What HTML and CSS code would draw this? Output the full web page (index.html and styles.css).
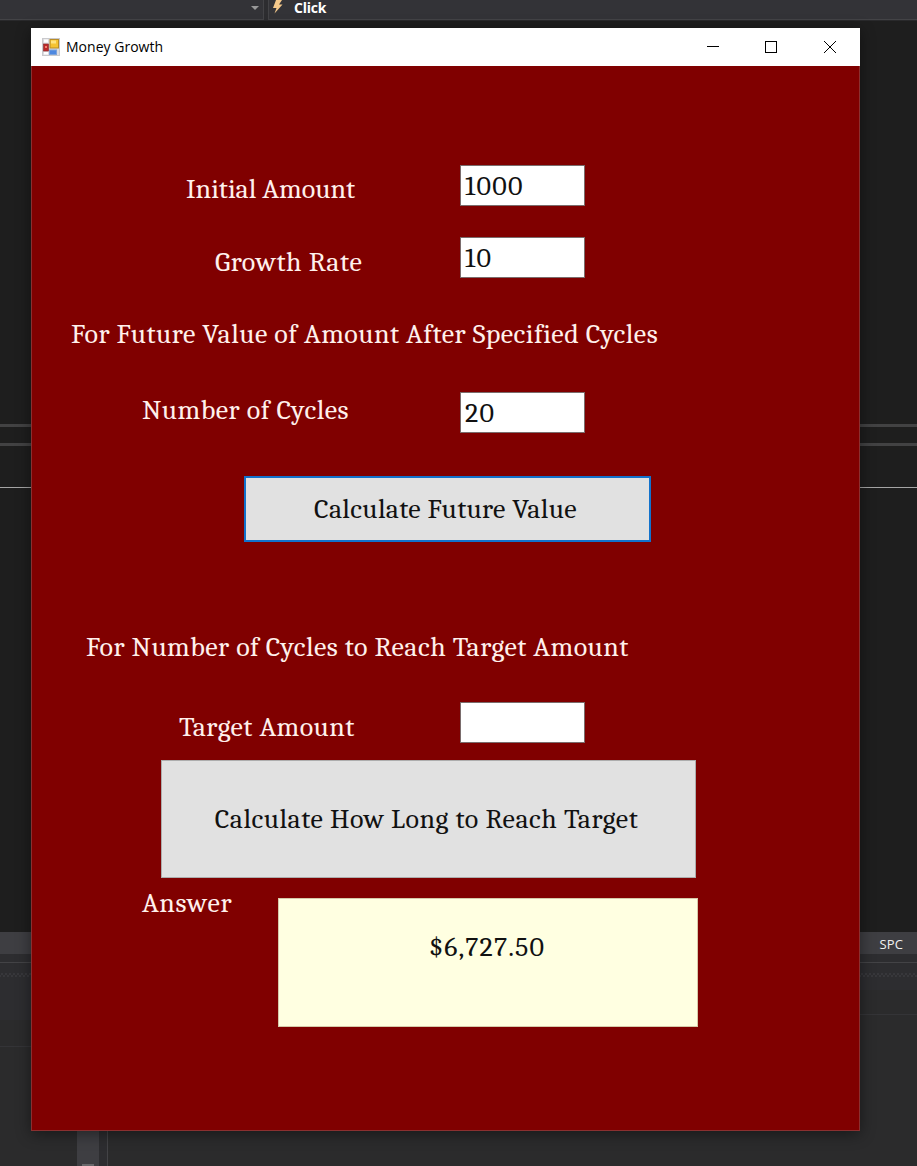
FILE: index.html
```html
<!DOCTYPE html>
<html lang="en">
<head>
<meta charset="utf-8">
<title>Money Growth</title>
<link rel="stylesheet" href="styles.css">
</head>
<body>
<div class="ide">
  <div class="toolbar">
    <div class="combo"><span class="caret"></span></div>
    <div class="combo event">
      <svg class="bolt" width="12" height="14" viewBox="0 0 12 14"><path d="M4 0H10L7 4.5H10.5L2.5 13.5L4.5 8H1Z" fill="#f5c98b"/></svg>
      <span>Click</span>
    </div>
  </div>
  <div class="editor"><div class="rule"></div><div class="rule second"></div><div class="rule bright"></div></div>
  <div class="status">SPC</div>
  <div class="splitter"></div>
  <div class="panels">
    <div class="panel left"></div>
    <div class="panel right"></div>
  </div>
  <div class="dock"><div class="scroll"><span></span></div><div class="dockline"></div></div>
</div>

<main class="window">
  <header class="titlebar">
    <svg class="appicon" width="18" height="18" viewBox="0 0 18 18">
      <rect x=".5" y=".5" width="17" height="17" fill="#dcdce0" stroke="#c9c9cc"/>
      <path d="M2 1.500H6V4.500H2ZM2 14H6V16.500H2Z" fill="#fff"/>
      <rect x="1.500" y="6" width="5" height="7" fill="#bd2929" stroke="#8d3232" stroke-width=".7"/>
      <rect x="3" y="8" width="2" height="2" fill="#f08070"/>
      <rect x="8" y="1.500" width="8.500" height="8.500" fill="#f6c331" stroke="#b88c27"/>
      <rect x="9" y="2.500" width="5" height="3" fill="#ffe37e"/>
      <rect x="7.500" y="12" width="7" height="4.500" fill="#4d88e0" stroke="#7ba2da"/>
    </svg>
    <span class="caption">Money Growth</span>
    <svg class="controls" width="132" height="14" viewBox="0 0 132 14" fill="none" stroke="#000">
      <path d="M0 6.500H12"/><rect x="58.500" y="1.500" width="11" height="11"/><path d="M117 1L129 13M129 1L117 13"/>
    </svg>
  </header>
  <form class="form">
    <div class="row initial"><label>Initial Amount</label><div class="field">1000</div></div>
    <div class="row growth"><label>Growth Rate</label><div class="field">10</div></div>
    <h2 class="future-title">For Future Value of Amount After Specified Cycles</h2>
    <div class="row cycles"><label>Number of Cycles</label><div class="field">20</div></div>
    <button type="button" class="calc-future">Calculate Future Value</button>
    <h2 class="target-title">For Number of Cycles to Reach Target Amount</h2>
    <div class="row target"><label>Target Amount</label><div class="field"></div></div>
    <button type="button" class="calc-target">Calculate How Long to Reach Target</button>
    <div class="result"><label>Answer</label><output>$6,727.50</output></div>
  </form>
</main>
</body>
</html>
```
FILE: styles.css
```css
* { box-sizing: border-box; }
body { margin: 0; width: 917px; height: 1166px; overflow: hidden; position: relative; background: #1e1e1e; font-family: "Open Sans", sans-serif; }
.ide { height: 1166px; display: flex; flex-direction: column; background: #2b2b2c; }
.toolbar { height: 21px; flex: none; display: flex; gap: 4px; background: #2d2d30; border-bottom: 1px solid #29292b; }
.combo { width: 264px; height: 20px; background: #333337; border: solid #434346; border-width: 0 1px 1px 0; display: flex; justify-content: flex-end; padding: 6px 4px 0; }
.caret { width: 0; height: 0; border: 4px solid transparent; border-top-color: #999; border-bottom: 0; }
.event { flex: 1; border-width: 0 0 1px 1px; justify-content: flex-start; padding: 0 0 0 3px; gap: 10px; color: #fff; font-size: 14px; font-weight: 700; line-height: 16px; letter-spacing: -.25px; }
.bolt { flex: none; }
.editor { height: 911px; flex: none; padding-top: 403px; background: #1e1e1e; }
.rule { height: 3px; background: #424243; }
.second { margin-top: 16px; }
.bright { height: 1px; background: #a5a5a5; margin-top: 41px; }
.status { height: 22px; flex: none; background: #3e3e42; color: #f1f1f1; font-size: 13px; line-height: 24px; text-align: right; padding-right: 14px; letter-spacing: .1px; }
.splitter { height: 36px; flex: none; background: radial-gradient(#434347 .6px, transparent .8px) 0 18px / 4px 4px repeat-x, radial-gradient(#434347 .6px, transparent .8px) 2px 20px / 4px 4px repeat-x, linear-gradient(#434346, #434346) 0 8px / 100% 1px no-repeat, #2d2d30; }
.panels { height: 141px; flex: none; display: flex; justify-content: space-between; }
.panel { width: 60px; }
.left { background: linear-gradient(#343437, #343437) 0 56px / 100% 1px no-repeat, linear-gradient(#2d2d30 30px, #2b2b2c 30px); }
.right { background: linear-gradient(#343437, #343437) 0 24px / 100% 1px no-repeat, #2b2b2c; }
.dock { flex: 1; display: flex; padding-left: 77px; }
.scroll { width: 22px; background: #3e3e42; display: flex; align-items: flex-end; justify-content: center; }
.scroll span { width: 12px; height: 2px; background: #68686b; }
.dockline { width: 9px; border-right: 1px solid #434346; background: #2d2d30; }
.window { position: absolute; left: 31px; top: 28px; width: 829px; height: 1103px; background: #800000; box-shadow: 0 3px 14px rgba(0, 0, 0, .45); }
.titlebar { height: 38px; background: #fff; display: flex; align-items: center; padding: 0 21px 0 11px; }
.caption { margin: -2px 0 0 6px; font-size: 14px; color: #000; letter-spacing: .02px; }
.controls { margin-left: auto; }
.form { height: 1065px; border: 1px solid #8a3030; border-top: 0; padding-top: 99px; font: 28px/40px Cambria, Caladea, "Liberation Serif", serif; color: #fff0ec; display: flex; flex-direction: column; }
.row { display: flex; height: 41px; flex: none; }
.row label { width: 428px; padding-top: 5px; }
.field { width: 125px; height: 41px; background: #fff; border: 1px solid #7a6c6c; color: #111; padding-left: 4px; line-height: 40px; letter-spacing: 1.3px; }
.row.initial label { padding: 4px 0 0 154px; letter-spacing: -.05px; }
.growth { margin-top: 31px; }
.growth label { padding-left: 183px; letter-spacing: .55px; }
h2 { margin: 0; height: 40px; flex: none; font: inherit; white-space: nowrap; }
.future-title { margin: 36px 0 0 39px; letter-spacing: .43px; }
.cycles { margin-top: 38px; }
.row.cycles label { padding: 0 0 0 110px; margin-top: -2px; letter-spacing: .45px; }
button { font: inherit; color: #111; background: #e1e1e1; border: 1px solid #adadad; border-radius: 0; padding: 0; flex: none; }
.calc-future { width: 407px; height: 66px; margin: 43px 0 0 212px; border: 2px solid #1272cc; letter-spacing: .29px; padding-right: 4px; }
.target-title { margin: 85px 0 0 54px; letter-spacing: .43px; }
.target { margin-top: 35px; }
.target label { padding-left: 147px; letter-spacing: .4px; }
.calc-target { width: 535px; height: 118px; margin: 17px 0 0 129px; letter-spacing: .48px; padding-right: 4px; }
.result { display: flex; padding: 20px 0 0 110px; }
.result label { width: 136px; margin-top: -15px; letter-spacing: .6px; }
output { width: 420px; height: 129px; background: #ffffe1; border: 1px solid #d6c9a9; color: #111; text-align: center; padding: 28px 2px 0 0; letter-spacing: 1.1px; }
```
